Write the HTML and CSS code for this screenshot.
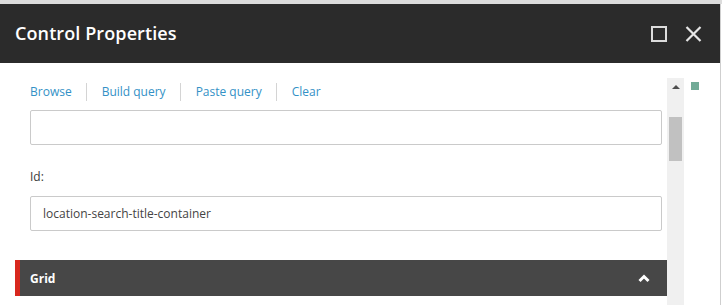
FILE: index.html
```html
<!DOCTYPE html>
<html lang="en">
<head>
  <meta charset="UTF-8">
  <title>Control Properties</title>
  <link rel="stylesheet" href="styles.css">
</head>
<body>
  <div class="page">
    <div class="dialog">
      <div class="dialog-header">
        <h1 class="dialog-title">Control Properties</h1>
        <div class="header-buttons">
          <svg class="hdr-icon" width="16" height="16" viewBox="0 0 16 16">
            <rect x="1" y="1" width="14" height="14" fill="none" stroke="#dcdcdc" stroke-width="2"/>
          </svg>
          <svg class="hdr-icon" width="17" height="16" viewBox="0 0 17 16">
            <path d="M1.5 1 L15.5 15 M15.5 1 L1.5 15" stroke="#e6e6e6" stroke-width="2.2" fill="none"/>
          </svg>
        </div>
      </div>

      <div class="dialog-body">
        <div class="content">
          <div class="field">
            <div class="links">
              <a class="link">Browse</a>
              <a class="link">Build query</a>
              <a class="link">Paste query</a>
              <a class="link">Clear</a>
            </div>
            <div class="text-input"></div>
          </div>

          <div class="field">
            <div class="label">Id:</div>
            <div class="text-input">location-search-title-container</div>
          </div>

          <div class="section-bar">
            <span class="section-title">Grid</span>
            <svg width="12" height="9" viewBox="0 0 12 9">
              <path d="M1.5 7 L6 2.5 L10.5 7" stroke="#fff" stroke-width="3" fill="none"/>
            </svg>
          </div>
        </div>

        <div class="scrollbar">
          <div class="scroll-arrow"></div>
          <div class="scroll-thumb"></div>
        </div>

        <div class="side">
          <div class="side-mark"></div>
        </div>
      </div>
    </div>
    <div class="page-edge"></div>
  </div>
</body>
</html>
```

FILE: styles.css
```css
body {
  margin: 0;
  width: 722px;
  height: 305px;
  overflow: hidden;
  background-color: #fff;
  font-family: "Open Sans", Arial, sans-serif;
}

.page {
  display: flex;
  height: 305px;
  padding-top: 4px;
  box-sizing: border-box;
  background-color: #dcdcdc;
}

.dialog {
  width: 720px;
  display: flex;
  flex-direction: column;
  background-color: #fff;
}

.page-edge {
  width: 1px;
  border-left: 1px solid #cfcfcf;
  background-color: #fff;
}

.dialog-header {
  height: 59px;
  background-color: #2b2b2b;
  display: flex;
  align-items: center;
  justify-content: space-between;
  padding: 0 18px 0 15px;
}

.dialog-title {
  margin: 0;
  color: #fff;
  font-size: 18px;
  font-weight: 600;
  line-height: 24px;
  letter-spacing: 0.1px;
  position: relative;
  top: -1px;
}

.header-buttons {
  display: flex;
  align-items: center;
  gap: 18px;
}

.hdr-icon {
  display: block;
}

.dialog-body {
  flex: 1;
  display: flex;
}

.content {
  width: 652px;
  padding-left: 15px;
}

.field {
  margin: 0 5px 0 15px;
}

.links {
  display: flex;
  padding-top: 20px;
  margin-bottom: 9px;
}

.link {
  color: #3391c6;
  font-size: 12px;
  line-height: 18px;
  padding: 0 14px 0 15px;
  border-left: 1px solid #d4d4d4;
}

.link:first-child {
  padding-left: 0;
  border-left: none;
}

.label {
  margin-top: 23px;
  margin-bottom: 10px;
  font-size: 12px;
  line-height: 18px;
  color: #3a3a3a;
}

.text-input {
  height: 35px;
  box-sizing: border-box;
  border: 1px solid #cacaca;
  border-radius: 2px;
  padding: 0 12px;
  font-size: 12px;
  line-height: 33px;
  color: #444;
}

.section-bar {
  margin-top: 29px;
  height: 36px;
  background-color: #474747;
  border-left: 5px solid #d8281e;
  display: flex;
  align-items: center;
  justify-content: space-between;
  padding: 0 17px 0 10px;
}

.section-title {
  color: #fff;
  font-size: 12px;
  font-weight: 700;
}

.scrollbar {
  width: 17px;
  margin-top: 15px;
  background-color: #f0f0f0;
  display: flex;
  flex-direction: column;
  align-items: center;
}

.scroll-arrow {
  margin-top: 7px;
  width: 0;
  height: 0;
  border-left: 4px solid transparent;
  border-right: 4px solid transparent;
  border-bottom: 4px solid #4f4f4f;
}

.scroll-thumb {
  margin-top: 28px;
  width: 13px;
  height: 44px;
  background-color: #c1c1c1;
}

.side {
  flex: 1;
  padding: 19px 0 0 7px;
}

.side-mark {
  width: 8px;
  height: 8px;
  background-color: #72ab97;
}
```
